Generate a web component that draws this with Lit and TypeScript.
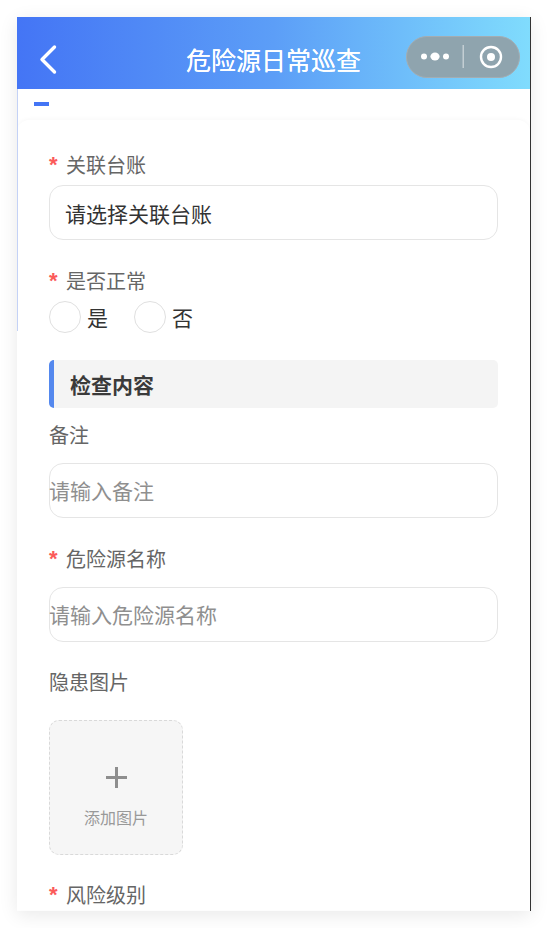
import { LitElement, html, css } from "lit";
import { customElement } from "lit/decorators.js";

@customElement("app-root")
export class AppRoot extends LitElement {
  static styles = css`
    :host {
      display: block;
      height: 928px;
      padding: 17px;
      box-sizing: border-box;
      background: #fff;
      font-family: "Noto Sans CJK SC", "Noto Sans", sans-serif;
      overflow: hidden;
    }
    .phone {
      position: relative;
      width: 514px;
      height: 894px;
      background: #fff;
      box-shadow: 0 4px 18px rgba(0, 0, 0, 0.09);
      border-right: 1px solid #333;
      box-sizing: border-box;
      overflow: hidden;
    }
    .edge {
      position: absolute;
      left: 0;
      top: 72px;
      width: 1px;
      height: 242px;
      background: #c4d2f6;
    }
    .header {
      height: 72px;
      background: linear-gradient(90deg, #4475f5 0%, #5c9ef7 50%, #80dcfd 100%);
      display: grid;
      grid-template-columns: 1fr auto 1fr;
      align-items: center;
      color: #fff;
    }
    .back {
      display: block;
      margin-left: 21px;
      margin-top: 14px;
      width: 20px;
      height: 32px;
    }
    .title {
      font-size: 25px;
      line-height: 32px;
      margin-top: 12px;
      white-space: nowrap;
      text-shadow: 0 0 0.6px #fff;
    }
    .capsule {
      justify-self: end;
      margin-right: 10px;
      margin-top: 7px;
      width: 114px;
      height: 42px;
      box-sizing: border-box;
      border: 1px solid #a3adb3;
      border-radius: 21px;
      background: #8fa4ae;
      display: block;
    }
    .tabbar {
      height: 31px;
      padding: 13px 0 0 17px;
      box-sizing: border-box;
      background: #fff;
    }
    .tabmark {
      width: 15px;
      height: 4px;
      background: #4475f5;
    }
    .form {
      padding: 30px 32px 0 32px;
      border-radius: 12px 12px 0 0;
      box-shadow: 0 -1px 4px rgba(0, 0, 0, 0.03);
    }
    .label {
      display: flex;
      align-items: center;
      height: 30px;
      font-size: 20px;
      line-height: 30px;
      color: #666;
      white-space: nowrap;
    }
    .label.gap-26 { margin-top: 26px; }
    .label.gap-25 { margin-top: 25px; }
    .label.gap-12 { margin-top: 12px; }
    .star {
      color: #fb5a5a;
      width: 17px;
      font-size: 22px;
      font-weight: 700;
      flex: none;
      font-family: "Liberation Sans", sans-serif;
    }
    .input {
      width: 449px;
      height: 55px;
      box-sizing: border-box;
      border: 1px solid #e5e5e5;
      border-radius: 14px;
      background: #fff;
      display: flex;
      align-items: center;
      font-size: 21px;
      color: #333;
      white-space: nowrap;
    }
    .input.sel { padding-left: 15px; margin-top: 5px; }
    .input.ph { margin-top: 13px; padding-bottom: 2px; color: #8f8f8f; }
    .input.ph span { margin-left: -1px; }
    .radios {
      display: flex;
      align-items: center;
      height: 34px;
      margin-top: 4px;
      font-size: 21px;
      color: #333;
    }
    .radio {
      width: 32px;
      height: 32px;
      box-sizing: border-box;
      border: 1px solid #e0e0e0;
      border-radius: 50%;
      margin-right: 6px;
    }
    .opt { width: 47px; line-height: 30px; }
    .section {
      width: 449px;
      height: 48px;
      margin-top: 26px;
      box-sizing: border-box;
      border-left: 5px solid #5488ee;
      border-radius: 5px;
      background: #f4f4f4;
      padding-left: 16px;
      display: flex;
      align-items: center;
      font-size: 21px;
      font-weight: 700;
      color: #3a3a3a;
    }
    .upload {
      width: 134px;
      height: 135px;
      margin-top: 23px;
      box-sizing: border-box;
      border: 1px dashed #d9d9d9;
      border-radius: 10px;
      background: #f6f6f6;
      display: flex;
      flex-direction: column;
      align-items: center;
      color: #999;
    }
    .plus { display: block; margin-top: 46px; width: 21px; height: 21px; }
    .uptext { font-size: 16px; line-height: 24px; margin-top: 17px; }
  `;

  render() {
    return html`
      <div class="phone">
        <div class="header">
          <svg class="back" viewBox="0 0 20 32" fill="none" stroke="#fff" stroke-width="3.4" stroke-linecap="round" stroke-linejoin="round">
            <path d="M16.5 3 L4 15.5 L16.5 28" />
          </svg>
          <div class="title">危险源日常巡查</div>
          <svg class="capsule" viewBox="0 0 112 40">
            <circle cx="17" cy="19.5" r="3" fill="#fff" />
            <ellipse cx="28" cy="19.5" rx="4.6" ry="4" fill="#fff" />
            <circle cx="39" cy="19.5" r="3" fill="#fff" />
            <rect x="55.5" y="8" width="1.5" height="23" fill="#c3ced3" />
            <circle cx="84" cy="20" r="10" fill="none" stroke="#fff" stroke-width="2.4" />
            <circle cx="84" cy="20" r="4" fill="#fff" />
          </svg>
        </div>
        <div class="edge"></div>
        <div class="tabbar"><div class="tabmark"></div></div>
        <div class="form">
          <div class="label"><span class="star">*</span>关联台账</div>
          <div class="input sel">请选择关联台账</div>

          <div class="label gap-26"><span class="star">*</span>是否正常</div>
          <div class="radios">
            <div class="radio"></div><div class="opt">是</div>
            <div class="radio"></div><div class="opt">否</div>
          </div>

          <div class="section">检查内容</div>

          <div class="label gap-12">备注</div>
          <div class="input ph"><span>请输入备注</span></div>

          <div class="label gap-26"><span class="star">*</span>危险源名称</div>
          <div class="input ph"><span>请输入危险源名称</span></div>

          <div class="label gap-25">隐患图片</div>
          <div class="upload">
            <svg class="plus" viewBox="0 0 21 21" fill="#8e8e8e"><rect x="0" y="9" width="21" height="3" /><rect x="9" y="0" width="3" height="21" /></svg>
            <div class="uptext">添加图片</div>
          </div>

          <div class="label gap-25"><span class="star">*</span>风险级别</div>
        </div>
      </div>
    `;
  }
}
